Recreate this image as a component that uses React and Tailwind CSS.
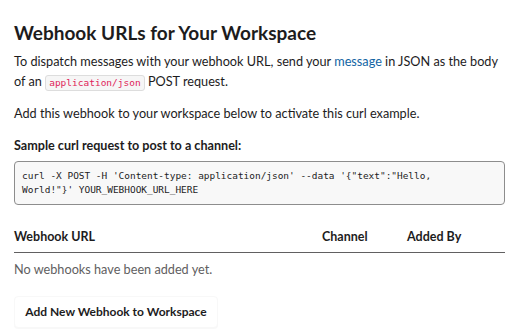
export default function App() {
  return (
    <div className="min-h-screen bg-white font-['Lato','Noto_Sans',sans-serif] text-[#1d1c1d]">
      <div className="w-[491px] ml-[14px] pt-[20px]">
        {/* Title */}
        <h1 className="text-[19px] leading-[26px] font-bold">Webhook URLs for Your Workspace</h1>

        <p className="mt-[5px] text-[12.7px] leading-[20px]">
          To dispatch messages with your webhook URL, send your{' '}
          <a className="text-[#1264a3]">message</a> in JSON as the body of an{' '}
          <code className="inline-block align-middle leading-[14px] font-['DejaVu_Sans_Mono',monospace] text-[9.5px] text-[#e01e5a] bg-[#f6f6f6] border border-[#dddddd] rounded-[3px] px-[3px]">
            application/json
          </code>{' '}
          POST request.
        </p>

        <p className="mt-[12px] text-[12.7px] leading-[20px]">
          Add this webhook to your workspace below to activate this curl example.
        </p>

        <h2 className="mt-[14px] text-[12.6px] leading-[18px] font-bold">
          Sample curl request to post to a channel:
        </h2>

        <pre className="mt-[6px] bg-[#f8f8f8] border border-[#8d8d8d] rounded-[4px] px-[7px] py-[6.5px] font-['DejaVu_Sans_Mono',monospace] text-[9.45px] leading-[14.5px] whitespace-pre-wrap text-[#1d1c1d]">
          {`curl -X POST -H 'Content-type: application/json' --data '{"text":"Hello,\nWorld!"}' YOUR_WEBHOOK_URL_HERE`}
        </pre>

        {/* Table */}
        <div className="mt-[18px] flex items-center h-[30px] border-b border-[#616061] text-[12.5px] font-bold">
          <div className="flex-1">Webhook URL</div>
          <div className="w-[85px]">Channel</div>
          <div className="w-[98px]">Added By</div>
        </div>
        <div className="mt-[7px] text-[12.7px] leading-[18px] text-[#616061]">
          No webhooks have been added yet.
        </div>

        <button className="mt-[18px] h-[32px] w-[204px] rounded-[4px] bg-white border border-[#f8f8f8] shadow-[0_1px_1px_rgba(0,0,0,0.03)] text-[12px] font-bold text-[#1d1c1d]">
          Add New Webhook to Workspace
        </button>
      </div>
    </div>
  );
}
